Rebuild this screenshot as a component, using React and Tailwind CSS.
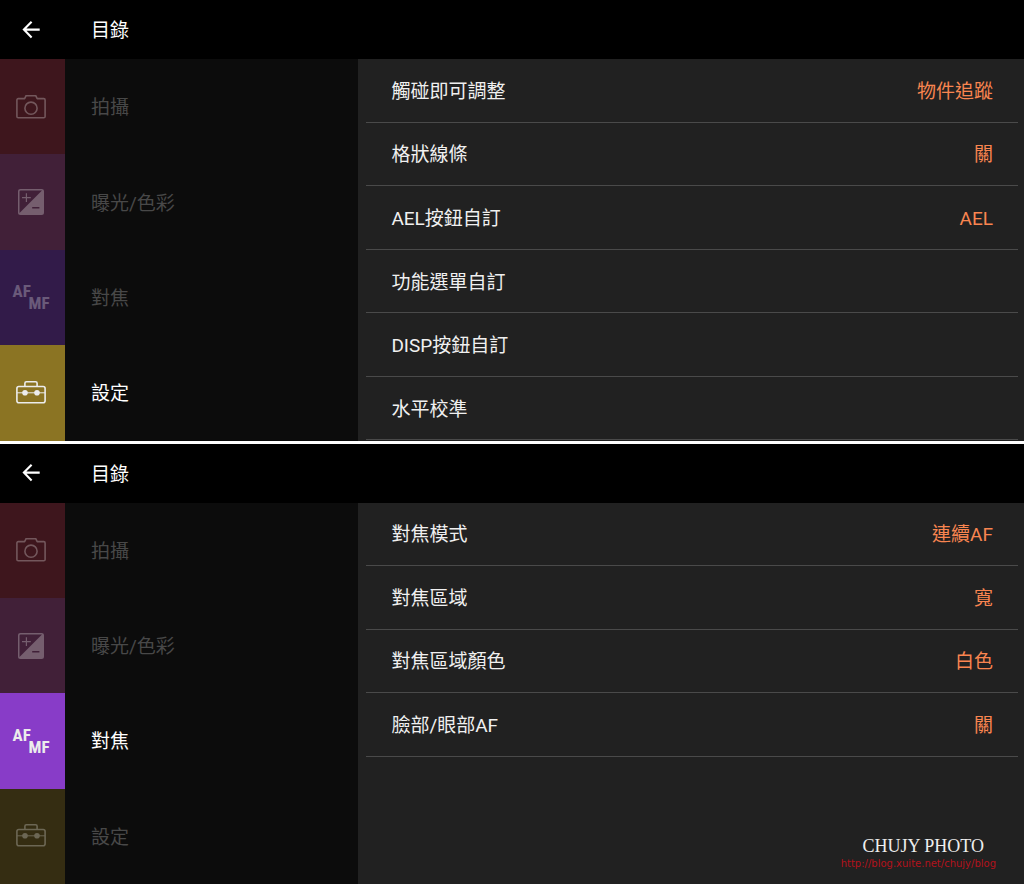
import React, { useState } from "react";
import clsx from "clsx";

function BackArrow() {
  return (
    <svg width="20" height="20" viewBox="0 0 20 20" fill="none" stroke="currentColor" strokeWidth="2.1" aria-hidden="true">
      <path d="M10.6 1.8 2.9 9.6l7.7 7.8M2.9 9.6h15.8" />
    </svg>
  );
}

function CameraIcon() {
  return (
    <svg width="32" height="24" viewBox="0 0 32 24" fill="none" stroke="currentColor" strokeWidth="1.6" strokeLinejoin="round" aria-hidden="true">
      <path d="M3.2 3.6h6.4l1.5-3h9.6l1.5 3h6.6a1.3 1.3 0 0 1 1.3 1.3v16.6a1.3 1.3 0 0 1-1.3 1.3H3.2a1.3 1.3 0 0 1-1.3-1.3V4.9a1.3 1.3 0 0 1 1.3-1.3Z" />
      <circle cx="16" cy="13.2" r="6.1" />
    </svg>
  );
}

function ExposureIcon() {
  return (
    <svg width="26" height="26" viewBox="0 0 26 26" fill="none" aria-hidden="true">
      <path
        fill="currentColor"
        fillRule="evenodd"
        d="M2.5 0h21A2.500 2.500 0 0 1 26 2.500v21a2.500 2.500 0 0 1-2.500 2.500h-21A2.500 2.500 0 0 1 0 23.500v-21A2.500 2.500 0 0 1 2.500 0ZM2.700 1.500A1.200 1.200 0 0 0 1.500 2.700V24L24 1.500ZM14.200 17.900v1.500h7.200v-1.500Z"
      />
      <path d="M8.4 4.3v8.800M4 8.700h8.800" stroke="currentColor" strokeWidth="1.2" />
    </svg>
  );
}

function FocusIcon() {
  return (
    <span className="flex w-[37px] flex-col font-['Roboto_Condensed','Roboto',sans-serif] text-[17px] leading-3 font-bold" aria-hidden="true">
      <span className="self-start">AF</span>
      <span className="self-end">MF</span>
    </span>
  );
}

function ToolboxIcon() {
  return (
    <svg width="32" height="24" viewBox="0 0 32 24" fill="none" stroke="currentColor" strokeWidth="1.6" aria-hidden="true">
      <path d="M9.9 5.500V2.300a1.500 1.500 0 0 1 1.500-1.500h9.200a1.500 1.500 0 0 1 1.500 1.500v3.200" />
      <rect x="1.9" y="5.5" width="28.2" height="16.3" rx="2" />
      <path d="M2 11.8h28" strokeWidth="1" />
      <circle cx="10" cy="11.8" r="2.8" fill="currentColor" stroke="none" />
      <circle cx="22" cy="11.8" r="2.8" fill="currentColor" stroke="none" />
    </svg>
  );
}

const categories = [
  { id: "shooting", label: "拍攝", Icon: CameraIcon, dim: "bg-[#3e161d]", active: "bg-[#a8283c]" },
  { id: "exposure", label: "曝光/色彩", Icon: ExposureIcon, dim: "bg-[#412038]", active: "bg-[#a8488e]" },
  { id: "focus", label: "對焦", Icon: FocusIcon, dim: "bg-[#321b49]", active: "bg-[#883cc8]" },
  { id: "setup", label: "設定", Icon: ToolboxIcon, dim: "bg-[#352d12]", active: "bg-[#8b7423]" },
];

const setupItems = [
  { label: "觸碰即可調整", value: "物件追蹤" },
  { label: "格狀線條", value: "關" },
  { label: "AEL按鈕自訂", value: "AEL" },
  { label: "功能選單自訂" },
  { label: "DISP按鈕自訂" },
  { label: "水平校準" },
];

const focusItems = [
  { label: "對焦模式", value: "連續AF" },
  { label: "對焦區域", value: "寬" },
  { label: "對焦區域顏色", value: "白色" },
  { label: "臉部/眼部AF", value: "關" },
];

function CategoryNav({ selected, onSelect }) {
  return (
    <nav className="flex w-[35%] shrink-0 flex-col bg-[#0c0c0c]">
      {categories.map(({ id, label, Icon, dim, active }) => {
        const isActive = id === selected;
        return (
          <button key={id} type="button" onClick={() => onSelect(id)} aria-current={isActive} className="flex flex-1 items-stretch text-left">
            <span className={clsx("flex w-[65px] shrink-0 items-center justify-center pr-[3px]", isActive ? active : dim)}>
              <span className={clsx("text-[#ececec]", !isActive && "opacity-30")}><Icon /></span>
            </span>
            <span className={clsx("self-center pt-[3px] pl-[26px]", isActive ? "text-white" : "text-[#484848]")}>{label}</span>
          </button>
        );
      })}
    </nav>
  );
}

function MenuPanel({ initial, items, children }) {
  const [selected, setSelected] = useState(initial);

  return (
    <section className="flex flex-1 flex-col">
      <header className="flex h-[59px] items-center bg-black">
        <button type="button" aria-label="返回" className="flex h-full w-[65px] items-center justify-center pr-[3px] text-white"><BackArrow /></button>
        <h2 className="pt-[3px] pl-[26px] text-white">目錄</h2>
      </header>
      <div className="flex flex-1">
        <CategoryNav selected={selected} onSelect={setSelected} />
        <div className="relative flex flex-1 bg-[#212121] pr-[6px] pl-2">
          <ul className="grid flex-1 grid-rows-6">
            {items.map((item) => (
              <li key={item.label} className="flex border-b border-[#4a4a4a]">
                <button type="button" className="flex min-h-14 flex-1 items-center justify-between px-[25px] pt-[3px] text-left">
                  <span className="text-[#f0f0f0]">{item.label}</span>
                  {item.value && <span className="text-[#f98550]">{item.value}</span>}
                </button>
              </li>
            ))}
          </ul>
          {children}
        </div>
      </div>
    </section>
  );
}

export default function App() {
  return (
    <main lang="zh-Hant" className="flex min-h-screen flex-col gap-[3px] bg-white font-[Roboto,'Noto_Sans_CJK_TC',sans-serif] text-[19px] leading-7">
      <MenuPanel initial="setup" items={setupItems} />
      <MenuPanel initial="focus" items={focusItems}>
        <div className="absolute right-7 bottom-3 flex flex-col items-end">
          <span className="pr-3 font-['Liberation_Serif',serif] text-lg leading-5 text-[#eeeeee]">CHUJY PHOTO</span>
          <a href="http://blog.xuite.net/chujy/blog" className="font-['DejaVu_Sans',sans-serif] text-[10px] leading-4 text-[#b3121c]">http://blog.xuite.net/chujy/blog</a>
        </div>
      </MenuPanel>
    </main>
  );
}
